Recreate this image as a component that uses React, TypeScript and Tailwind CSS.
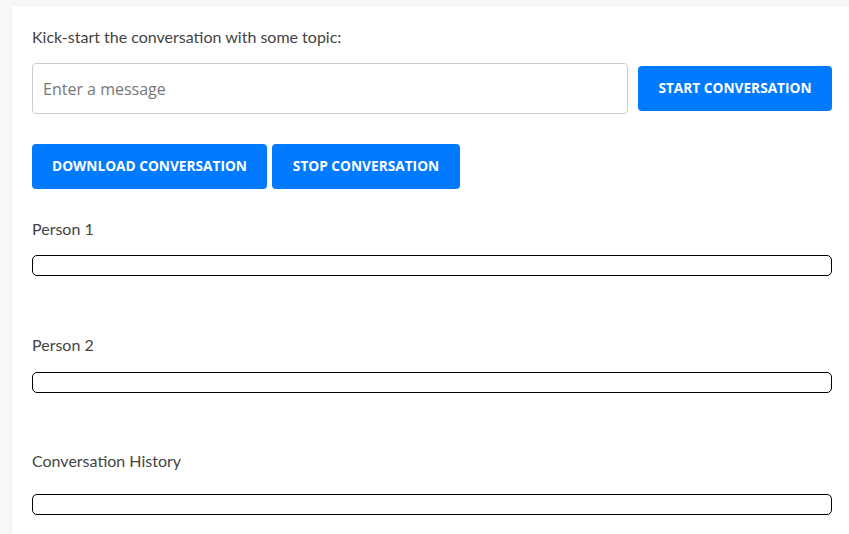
import React, { useState } from 'react';

const labelCls = "text-[16px] leading-[22px] text-[#444] [font-family:Lato,'Open_Sans',sans-serif]";
const btnCls =
  "h-[45px] rounded-[4px] bg-[#007bff] px-5 text-[13.7px] font-bold uppercase text-white [font-family:'Open_Sans',sans-serif]";

function OutputBox() {
  return <div className="h-[21px] w-full rounded-[5px] border border-black bg-white" />;
}

export default function App() {
  const [message, setMessage] = useState('');

  return (
    <div className="min-h-[534px] w-full bg-[#f7f7f7] pl-3 pt-[6px]">
      <div className="min-h-[528px] bg-white pl-5 pr-[17px] pt-[20px] shadow-[0_0_3px_rgba(0,0,0,0.06)]">
        <p className={labelCls}>Kick-start the conversation with some topic:</p>

        <div className="mt-[15px] flex items-start gap-[10px]">
          <input
            value={message}
            onChange={(e) => setMessage(e.target.value)}
            placeholder="Enter a message"
            className="h-[51px] flex-1 rounded-[4px] border border-[#ccc] px-[10px] text-[16px] text-[#333] outline-none placeholder:text-[#777] [font-family:'Open_Sans',sans-serif]"
          />
          <button className={`${btnCls} mt-[3px] w-[194px]`}>Start Conversation</button>
        </div>

        <div className="mt-[30px] flex gap-[5px]">
          <button className={`${btnCls} w-[235px]`}>Download Conversation</button>
          <button className={`${btnCls} w-[188px]`}>Stop Conversation</button>
        </div>

        <p className={`${labelCls} mt-[29px]`}>Person 1</p>
        <div className="mt-[15px]">
          <OutputBox />
        </div>

        <p className={`${labelCls} mt-[58px]`}>Person 2</p>
        <div className="mt-[16px]">
          <OutputBox />
        </div>

        <p className={`${labelCls} mt-[57px]`}>Conversation History</p>
        <div className="mt-[22px]">
          <OutputBox />
        </div>
      </div>
    </div>
  );
}
